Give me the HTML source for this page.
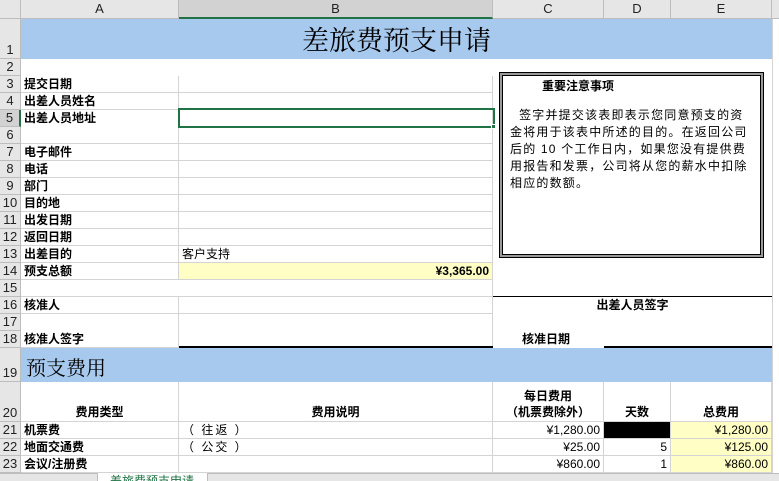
<!DOCTYPE html>
<html><head><meta charset="utf-8">
<style>
*{margin:0;padding:0;box-sizing:border-box}
body{width:779px;height:481px;overflow:hidden;background:#fff;position:relative;font-family:"Liberation Sans","Noto Sans CJK SC",sans-serif;font-size:12px;color:#000}
.c{position:absolute;border-right:1px solid #d4d4d4;border-bottom:1px solid #d4d4d4;white-space:nowrap;overflow:hidden;line-height:16px;padding:0 3px}
.b{font-weight:bold}
.r{text-align:right}
.ct{text-align:center}
.hd{position:absolute;background:#e6e6e6;color:#222;font-size:13px;text-align:center;border-right:1px solid #bdbdbd;border-bottom:1px solid #bdbdbd}
.rh{position:absolute;left:0;width:21px;background:#e6e6e6;color:#222;font-size:13px;text-align:center;border-right:1px solid #bdbdbd;border-bottom:1px solid #bdbdbd;display:flex;align-items:flex-end;justify-content:center;line-height:16px}
.y{background:#ffffc5}
.ln{position:absolute;background:#000}
</style></head><body>
<div class="hd" style="left:0;top:0;width:21px;height:19px"></div>
<div class="hd" style="left:21px;top:0;width:158px;height:19px;line-height:18px">A</div>
<div class="hd" style="left:179px;top:0;width:314px;height:19px;line-height:18px;border-bottom:2px solid #217346;background:#d2d2d2">B</div>
<div class="hd" style="left:493px;top:0;width:111px;height:19px;line-height:18px">C</div>
<div class="hd" style="left:604px;top:0;width:67px;height:19px;line-height:18px">D</div>
<div class="hd" style="left:671px;top:0;width:101px;height:19px;line-height:18px">E</div>
<div class="hd" style="left:772px;top:0;width:7px;height:19px;border-right:0"></div>
<div style="position:absolute;left:772px;top:19px;width:1px;height:454px;background:#d4d4d4"></div>

<div class="rh" style="top:19px;height:40px">1</div>
<div class="rh" style="top:59px;height:17px">2</div>
<div class="rh" style="top:76px;height:17px">3</div>
<div class="rh" style="top:93px;height:17px">4</div>
<div class="rh" style="top:110px;height:17px;background:#d2d2d2;border-right:2px solid #217346">5</div>
<div class="rh" style="top:127px;height:17px">6</div>
<div class="rh" style="top:144px;height:17px">7</div>
<div class="rh" style="top:161px;height:17px">8</div>
<div class="rh" style="top:178px;height:17px">9</div>
<div class="rh" style="top:195px;height:17px">10</div>
<div class="rh" style="top:212px;height:17px">11</div>
<div class="rh" style="top:229px;height:17px">12</div>
<div class="rh" style="top:246px;height:17px">13</div>
<div class="rh" style="top:263px;height:17px">14</div>
<div class="rh" style="top:280px;height:17px">15</div>
<div class="rh" style="top:297px;height:17px">16</div>
<div class="rh" style="top:314px;height:17px">17</div>
<div class="rh" style="top:331px;height:17px">18</div>
<div class="rh" style="top:348px;height:34px">19</div>
<div class="rh" style="top:382px;height:40px">20</div>
<div class="rh" style="top:422px;height:17px">21</div>
<div class="rh" style="top:439px;height:17px">22</div>
<div class="rh" style="top:456px;height:17px">23</div>

<div style="position:absolute;left:21px;top:19px;width:751px;height:40px;background:#a7c9ee;text-align:center;font-family:'Liberation Serif','Noto Serif CJK SC',serif;font-size:27px;line-height:44px">差旅费预支申请</div>

<div class="c b" style="left:21px;top:76px;width:158px;height:17px">提交日期</div><div class="c" style="left:179px;top:76px;width:314px;height:17px"></div>
<div class="c b" style="left:21px;top:93px;width:158px;height:17px">出差人员姓名</div><div class="c" style="left:179px;top:93px;width:314px;height:17px"></div>
<div class="c b" style="left:21px;top:110px;width:158px;height:34px">出差人员地址</div><div class="c" style="left:179px;top:110px;width:314px;height:34px"></div>
<div class="c b" style="left:21px;top:144px;width:158px;height:17px">电子邮件</div><div class="c" style="left:179px;top:144px;width:314px;height:17px"></div>
<div class="c b" style="left:21px;top:161px;width:158px;height:17px">电话</div><div class="c" style="left:179px;top:161px;width:314px;height:17px"></div>
<div class="c b" style="left:21px;top:178px;width:158px;height:17px">部门</div><div class="c" style="left:179px;top:178px;width:314px;height:17px"></div>
<div class="c b" style="left:21px;top:195px;width:158px;height:17px">目的地</div><div class="c" style="left:179px;top:195px;width:314px;height:17px"></div>
<div class="c b" style="left:21px;top:212px;width:158px;height:17px">出发日期</div><div class="c" style="left:179px;top:212px;width:314px;height:17px"></div>
<div class="c b" style="left:21px;top:229px;width:158px;height:17px">返回日期</div><div class="c" style="left:179px;top:229px;width:314px;height:17px"></div>
<div class="c b" style="left:21px;top:246px;width:158px;height:17px">出差目的</div><div class="c" style="left:179px;top:246px;width:314px;height:17px">客户支持</div>
<div class="c b" style="left:21px;top:263px;width:158px;height:17px">预支总额</div><div class="c b r y" style="left:179px;top:263px;width:314px;height:17px">¥3,365.00</div>
<div class="c" style="left:21px;top:280px;width:472px;height:17px"></div>
<div style="position:absolute;left:178px;top:108px;width:317px;height:20px;border:2px solid #217346"></div>
<div style="position:absolute;left:491px;top:124px;width:5px;height:5px;background:#217346;border:1px solid #fff"></div>

<div class="c b" style="left:21px;top:297px;width:158px;height:17px">核准人</div><div class="c" style="left:179px;top:297px;width:314px;height:17px"></div>
<div class="c b" style="left:21px;top:314px;width:158px;height:34px;padding-top:17px">核准人签字</div>
<div class="c" style="left:179px;top:314px;width:314px;height:34px"></div>
<div class="ln" style="left:179px;top:346px;width:314px;height:2px"></div>
<div class="ln" style="left:493px;top:296px;width:279px;height:1px"></div>
<div class="b ct" style="position:absolute;left:493px;top:297px;width:279px;line-height:16px">出差人员签字</div>
<div class="b" style="position:absolute;left:522px;top:331px;line-height:16px">核准日期</div>
<div class="ln" style="left:604px;top:346px;width:168px;height:2px"></div>

<div style="position:absolute;left:499px;top:72px;width:265px;height:186px;border:1px solid #000;background:#9a9a9a;padding:2px">
 <div style="width:100%;height:100%;border:1px solid #000;background:#fff;position:relative">
  <div class="b" style="position:absolute;left:39px;top:3px;line-height:14px">重要注意事项</div>
  <div style="position:absolute;left:7px;top:31px;width:260px;line-height:17px;font-size:12px;letter-spacing:1.2px;white-space:nowrap">&nbsp;&nbsp;签字并提交该表即表示您同意预支的资<br>金将用于该表中所述的目的。在返回公司<br>后的 10 个工作日内，如果您没有提供费<br>用报告和发票，公司将从您的薪水中扣除<br>相应的数额。</div>
 </div>
</div>

<div style="position:absolute;left:21px;top:348px;width:751px;height:34px;background:#a7c9ee;font-family:'Liberation Serif','Noto Serif CJK SC',serif;font-size:20px;line-height:42px;padding-left:5px">预支费用</div>

<div class="c b ct" style="left:21px;top:382px;width:158px;height:40px;line-height:16px;padding-top:22px">费用类型</div>
<div class="c b ct" style="left:179px;top:382px;width:314px;height:40px;padding-top:22px">费用说明</div>
<div class="c b ct" style="left:493px;top:382px;width:111px;height:40px;padding-top:6px">每日费用<br>（机票费除外）</div>
<div class="c b ct" style="left:604px;top:382px;width:67px;height:40px;padding-top:22px">天数</div>
<div class="c b ct" style="left:671px;top:382px;width:101px;height:40px;padding-top:22px">总费用</div>

<div class="c b" style="left:21px;top:422px;width:158px;height:17px">机票费</div>
<div class="c" style="left:179px;top:422px;width:314px;height:17px;letter-spacing:2px">（ 往返 ）</div>
<div class="c r" style="left:493px;top:422px;width:111px;height:17px">¥1,280.00</div>
<div class="c" style="left:604px;top:422px;width:67px;height:17px;background:#000"></div>
<div class="c r y" style="left:671px;top:422px;width:101px;height:17px">¥1,280.00</div>

<div class="c b" style="left:21px;top:439px;width:158px;height:17px">地面交通费</div>
<div class="c" style="left:179px;top:439px;width:314px;height:17px;letter-spacing:2px">（ 公交 ）</div>
<div class="c r" style="left:493px;top:439px;width:111px;height:17px">¥25.00</div>
<div class="c r" style="left:604px;top:439px;width:67px;height:17px">5</div>
<div class="c r y" style="left:671px;top:439px;width:101px;height:17px">¥125.00</div>

<div class="c b" style="left:21px;top:456px;width:158px;height:17px">会议/注册费</div>
<div class="c" style="left:179px;top:456px;width:314px;height:17px"></div>
<div class="c r" style="left:493px;top:456px;width:111px;height:17px">¥860.00</div>
<div class="c r" style="left:604px;top:456px;width:67px;height:17px">1</div>
<div class="c r y" style="left:671px;top:456px;width:101px;height:17px">¥860.00</div>

<div style="position:absolute;left:0;top:473px;width:779px;height:8px;background:#e6e6e6;border-top:1px solid #bdbdbd"></div>
<div style="position:absolute;left:97px;top:473px;width:111px;height:8px;background:#fff;border-left:1px solid #bdbdbd;border-right:1px solid #bdbdbd;overflow:hidden;color:#217346;font-size:12px;line-height:16px;padding-left:12px">差旅费预支申请</div>
</body></html>
